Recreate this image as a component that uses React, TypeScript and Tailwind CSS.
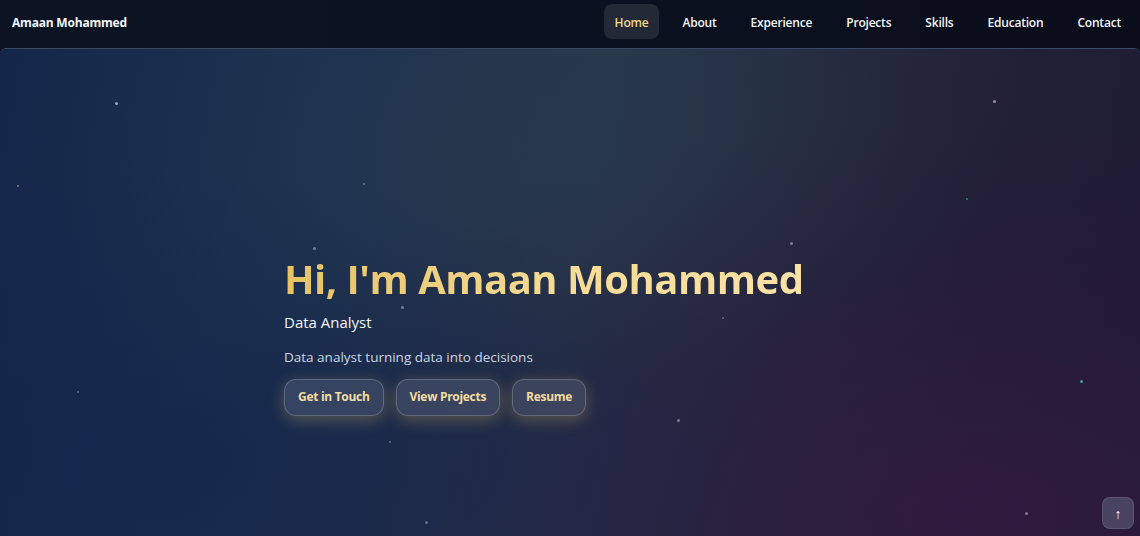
import { useState } from "react";

const navItems = ["Home", "About", "Experience", "Projects", "Skills", "Education", "Contact"];

// little specks scattered across the hero backdrop
const stars = [
  { x: 115, y: 53, s: 3, c: "bg-slate-300/70" },
  { x: 17, y: 136, s: 2, c: "bg-rose-300/60" },
  { x: 363, y: 134, s: 2, c: "bg-slate-300/40" },
  { x: 313, y: 198, s: 3, c: "bg-slate-300/50" },
  { x: 401, y: 257, s: 3, c: "bg-slate-300/50" },
  { x: 722, y: 268, s: 2, c: "bg-slate-300/40" },
  { x: 790, y: 193, s: 3, c: "bg-slate-300/50" },
  { x: 993, y: 51, s: 3, c: "bg-rose-200/60" },
  { x: 966, y: 149, s: 2, c: "bg-teal-300/50" },
  { x: 77, y: 342, s: 2, c: "bg-slate-300/40" },
  { x: 389, y: 392, s: 2, c: "bg-slate-300/40" },
  { x: 677, y: 370, s: 3, c: "bg-slate-300/50" },
  { x: 1080, y: 331, s: 3, c: "bg-teal-300/60" },
  { x: 425, y: 472, s: 3, c: "bg-slate-300/40" },
  { x: 1025, y: 463, s: 3, c: "bg-slate-300/50" },
];

export default function App() {
  const [active, setActive] = useState("Home");

  return (
    <div
      className="relative h-[536px] w-full overflow-hidden bg-[#0b1120] text-white"
      style={{ fontFamily: '"Open Sans", "Noto Sans", sans-serif' }}
    >
      {/* Top navigation */}
      <header className="flex h-12 items-start justify-between bg-gradient-to-r from-[#0c1424] via-[#0b1120] to-[#0a0d1a] pl-3 pr-[8px] pt-[4px]">
        <span className="mt-[10px] text-[12px] font-bold tracking-[-0.2px] text-slate-100">Amaan Mohammed</span>
        <nav className="flex items-center gap-[12px]">
          {navItems.map((item) => (
            <button
              key={item}
              onClick={() => setActive(item)}
              className={`h-[35px] rounded-lg px-[11px] pt-[2px] text-[12px] font-semibold tracking-[-0.2px] ${
                active === item ? "bg-white/10 text-[#f1d68f]" : "text-slate-100"
              }`}
            >
              {item}
            </button>
          ))}
        </nav>
      </header>

      {/* Hero */}
      <section className="relative h-[488px] overflow-hidden rounded-t-md border-t border-white/15 bg-[#1a2a48]">
        <div className="absolute inset-0 bg-[linear-gradient(100deg,#14274a_0%,#1e3250_30%,#26384b_50%,#252b3f_68%,#211f36_85%,#1e1b33_100%)]" />
        <div className="absolute inset-0 bg-[radial-gradient(ellipse_at_85%_95%,rgba(52,26,66,0.8)_0%,rgba(40,24,58,0.4)_35%,transparent_60%)]" />
        <div className="absolute inset-0 bg-[radial-gradient(ellipse_at_45%_20%,rgba(44,60,76,0.4)_0%,transparent_45%)]" />
        <div className="absolute inset-0 bg-[radial-gradient(ellipse_at_10%_85%,rgba(18,38,76,0.7)_0%,transparent_50%)]" />

        {stars.map((st, i) => (
          <span
            key={i}
            className={`absolute rounded-full ${st.c}`}
            style={{ left: st.x, top: st.y, width: st.s, height: st.s }}
          />
        ))}

        <div className="relative flex justify-center pt-[206px]">
          <div className="w-[572px]">
            <h1 className="bg-gradient-to-r from-[#e6c264] via-[#f6dc97] to-[#fbe4aa] bg-clip-text text-[40px] font-bold leading-[48px] tracking-[-0.5px] text-transparent">
              Hi, I'm Amaan Mohammed
            </h1>
            <p className="mt-[8px] text-[15px] font-medium text-slate-100">Data Analyst</p>
            <p className="mt-[13px] text-[13.5px] text-slate-300">Data analyst turning data into decisions</p>
            <div className="mt-[12px] flex gap-3">
              {["Get in Touch", "View Projects", "Resume"].map((label) => (
                <button
                  key={label}
                  className="h-[37px] rounded-xl border border-white/20 bg-white/[0.12] px-[13px] text-[12px] font-bold tracking-[-0.3px] text-[#f3dca0] shadow-[0_4px_16px_rgba(230,196,100,0.3)]"
                >
                  {label}
                </button>
              ))}
            </div>
          </div>
        </div>

        {/* back to top */}
        <button className="absolute bottom-[7px] right-[6px] flex h-8 w-8 items-center justify-center rounded-lg border border-white/10 bg-slate-400/30 text-[14px] font-semibold text-white">
          ↑
        </button>
      </section>
    </div>
  );
}
